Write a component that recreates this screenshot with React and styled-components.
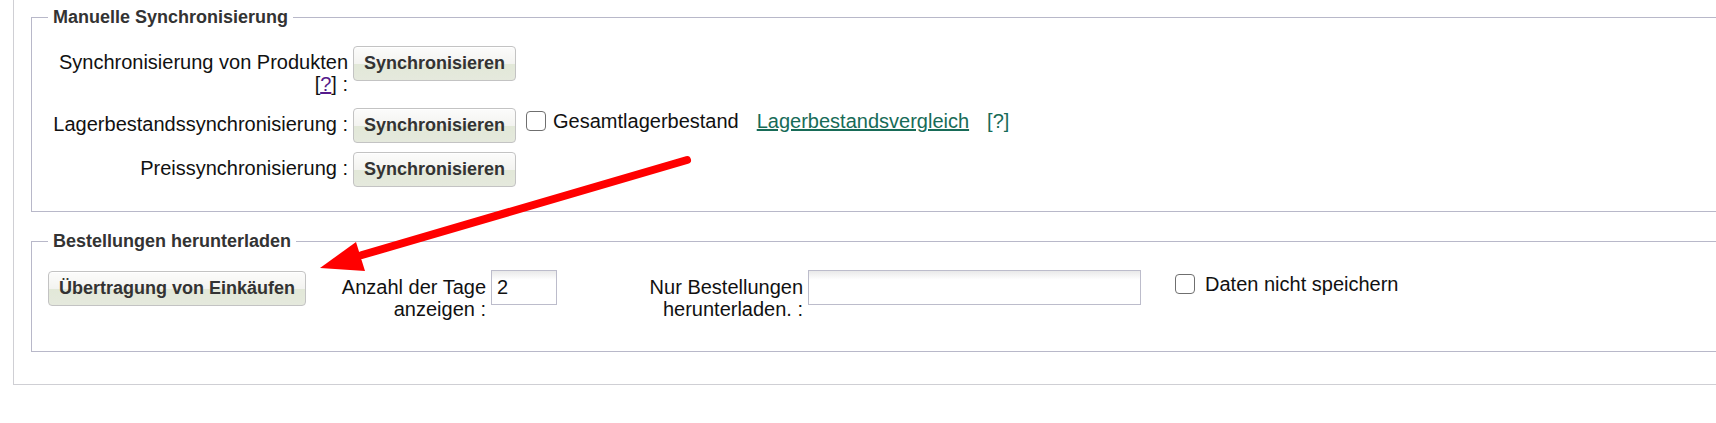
import React from 'react'
import styled, { createGlobalStyle } from 'styled-components'

const GlobalStyle = createGlobalStyle`
    html, body {
        margin: 0;
        padding: 0;
        background: #fff;
        overflow: hidden;
    }
    body {
        font-family: "Liberation Sans", Arial, sans-serif;
        font-size: 20px;
        line-height: 22px;
        color: #111;
    }
`

const App = () => {
    return (
        <Page>
            <GlobalStyle />
            <Panel>
                <Box>
                    <Legend>Manuelle Synchronisierung</Legend>
                    <Row>
                        <Label width={300}>
                            Synchronisierung von Produkten <Help>[<a href="#p">?</a>]</Help> :
                        </Label>
                        <Button>Synchronisieren</Button>
                    </Row>
                    <Row>
                        <Label width={300}>Lagerbestandssynchronisierung :</Label>
                        <Button>Synchronisieren</Button>
                        <Check gap={10} inner={7}>
                            <Box2 type="checkbox" />
                            Gesamtlagerbestand
                        </Check>
                        <Link gap={18} href="#v">Lagerbestandsvergleich</Link>
                        <Link gap={18} href="#h" plain>[?]</Link>
                    </Row>
                    <Row>
                        <Label width={300}>Preissynchronisierung :</Label>
                        <Button>Synchronisieren</Button>
                    </Row>
                </Box>

                <Box>
                    <Legend>Bestellungen herunterladen</Legend>
                    <Row>
                        <Button>Übertragung von Einkäufen</Button>
                        <Label width={150} gap={30}>Anzahl der Tage anzeigen :</Label>
                        <Input width={66} defaultValue="2" />
                        <Label width={160} gap={86}>Nur Bestellungen herunterladen. :</Label>
                        <Input width={333} />
                        <Check gap={34} inner={10}>
                            <Box2 type="checkbox" />
                            Daten nicht speichern
                        </Check>
                    </Row>
                </Box>
            </Panel>

            {/* annotation arrow drawn over the page */}
            <Arrow width="1716" height="423" viewBox="0 0 1716 423">
                <line x1="687" y1="160" x2="362" y2="255" stroke="#ff0000" strokeWidth="8" strokeLinecap="round" />
                <polygon points="320,268 356,242 365,271" fill="#ff0000" />
            </Arrow>
        </Page>
    )
}

const Page = styled.div`
    position: relative;
    width: 1716px;
    height: 423px;
`

const Panel = styled.div`
    margin-left: 13px;
    width: 1780px;
    padding: 7px 0 32px 17px;
    border-left: 1px solid #cfcfd4;
    border-bottom: 1px solid #cfcfd4;
    display: flex;
    flex-direction: column;
    gap: 19px;
`

const Box = styled.fieldset`
    margin: 0;
    padding: 19px 16px 24px 16px;
    border: 1px solid #b8b8c9;
    display: flex;
    flex-direction: column;
    gap: 9px;
    &:last-child {
        padding-bottom: 31px;
    }
`

const Legend = styled.legend`
    margin-left: 0;
    padding: 0 5px;
    font-size: 18px;
    font-weight: bold;
    line-height: 20px;
    color: #333;
`

const Row = styled.div`
    display: flex;
    align-items: baseline;
`

const Label = styled.span`
    width: ${p => p.width}px;
    margin-left: ${p => p.gap || 0}px;
    margin-right: 5px;
    text-align: right;
    flex-shrink: 0;
`

const Help = styled.span`
    display: inline-block;
    padding-bottom: 4px;
    a {
        color: #551a8b;
    }
`

const Button = styled.button`
    font-family: "Liberation Sans", Arial, sans-serif;
    font-size: 18px;
    font-weight: bold;
    line-height: 21px;
    color: #333;
    padding: 6px 10px;
    border: 1px solid #c3c3c3;
    border-radius: 4px;
    background: linear-gradient(to bottom, #fcfcfb 0%, #f3f3f0 50%, #e2e8d8 51%, #e5e9dd 100%);
    box-shadow: inset 0 1px 0 #fff;
    flex-shrink: 0;
`

const Check = styled.label`
    display: inline-flex;
    align-items: center;
    gap: ${p => p.inner}px;
    margin-left: ${p => p.gap || 0}px;
    flex-shrink: 0;
`

const Box2 = styled.input`
    appearance: none;
    margin: 0;
    width: 20px;
    height: 20px;
    border: 1.5px solid #6f6f6f;
    border-radius: 4px;
    background: #fff;
`

const Link = styled.a`
    margin-left: ${p => p.gap || 0}px;
    color: #176b57;
    text-decoration: ${p => (p.plain ? 'none' : 'underline')};
    position: relative;
    top: -3px;
    flex-shrink: 0;
`

const Input = styled.input`
    box-sizing: border-box;
    width: ${p => p.width}px;
    height: 35px;
    padding: 0 5px;
    font-family: "Liberation Sans", Arial, sans-serif;
    font-size: 20px;
    color: #111;
    border: 1px solid #bcbccb;
    background: linear-gradient(to bottom, #e9e9e9 0px, #fff 9px);
    flex-shrink: 0;
`

const Arrow = styled.svg`
    position: absolute;
    top: 0;
    left: 0;
    pointer-events: none;
`

export default App
